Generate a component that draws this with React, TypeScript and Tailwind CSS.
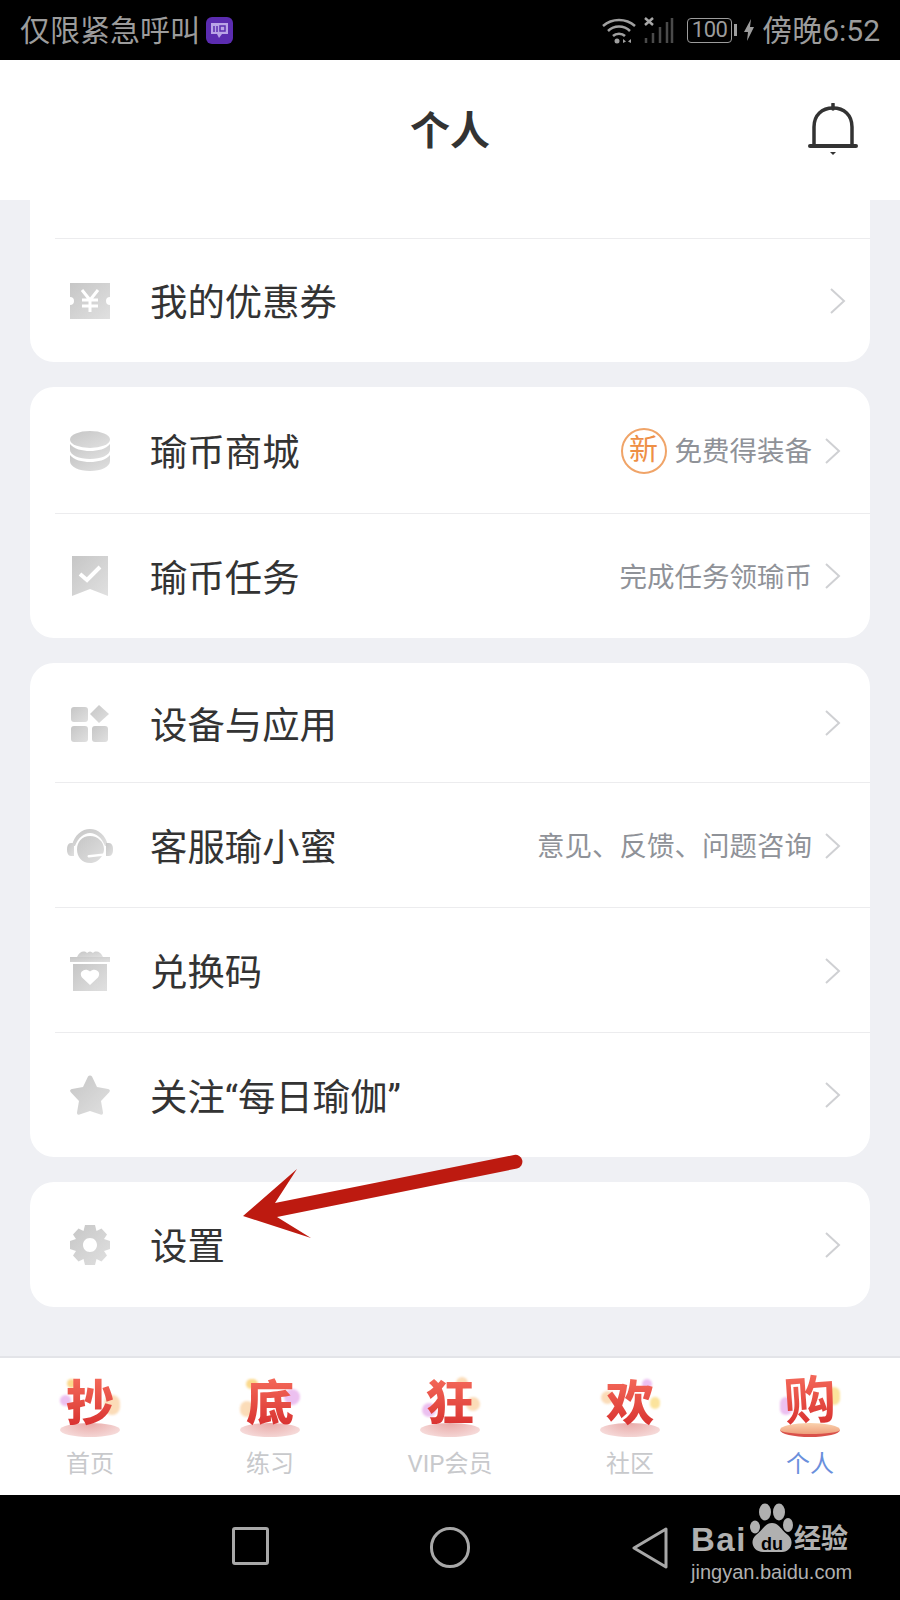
import { ReactNode, useId } from "react";

const CJK = "font-['Roboto','Noto_Sans_CJK_SC',sans-serif]";

function GreyIcon({ w, h, children }: { w: number; h: number; children: (fill: string) => ReactNode }) {
    const id = useId();
    return (
        <svg width={w} height={h} viewBox={`0 0 ${w} ${h}`}>
            <defs>
                <linearGradient id={id} x1="0" y1="0" x2="1" y2="1">
                    <stop offset="0" stopColor="#c6c6c6" />
                    <stop offset="1" stopColor="#e0e0e0" />
                </linearGradient>
            </defs>
            {children(`url(#${id})`)}
        </svg>
    );
}

const CouponIcon = () => (
    <GreyIcon w={40} h={36}>
        {(f) => (
            <>
                <path d="M0 0H40V14A4 4 0 0 0 40 22V36H0V22A4 4 0 0 0 0 14Z" fill={f} />
                <path d="M12 7L20 17L28 7M20 17V29M12 17H28M12 23H28" stroke="#fff" strokeWidth="3" fill="none" />
            </>
        )}
    </GreyIcon>
);

const CoinsIcon = () => (
    <GreyIcon w={40} h={40}>
        {(f) => (
            <>
                <ellipse cx="20" cy="8.500" rx="20" ry="8.500" fill={f} />
                <path d="M0 13C4 18 12 20 20 20S36 18 40 13V19C40 24 31 28 20 28S0 24 0 19Z" fill={f} />
                <path d="M0 24C4 29 12 31 20 31S36 29 40 24V30C40 36 31 40 20 40S0 36 0 30Z" fill={f} />
            </>
        )}
    </GreyIcon>
);

const BookmarkIcon = () => (
    <GreyIcon w={36} h={40}>
        {(f) => (
            <>
                <path d="M0 0H36V40L18 33L0 40Z" fill={f} />
                <path d="M8 18L15 24L28 11" stroke="#fff" strokeWidth="4" fill="none" />
            </>
        )}
    </GreyIcon>
);

const GridIcon = () => (
    <GreyIcon w={38} h={37}>
        {(f) => (
            <>
                <rect x="0" y="2" width="17" height="15" rx="3" fill={f} />
                <path d="M28 0L38 9L28 18L19 9Z" fill={f} />
                <rect x="0" y="21" width="17" height="16" rx="3" fill={f} />
                <rect x="21" y="21" width="16" height="16" rx="3" fill={f} />
            </>
        )}
    </GreyIcon>
);

const HeadsetIcon = () => (
    <GreyIcon w={46} h={34}>
        {(f) => (
            <>
                <path d="M5 17C7 6 15 0 23 0S39 6 41 17H38C35 9 29 4 23 4S11 9 8 17Z" fill={f} />
                <path d="M7 14V27H4C1 27 0 24 0 20.500S1 14 4 14Z" fill={f} />
                <path d="M39 14V27H42C45 27 46 24 46 20.500S45 14 42 14Z" fill={f} />
                <path d="M23 7C31 7 37 13 37 20C37 22 36.500 23.500 36 24.500L22 26C20 26 20 28.500 22 28.500L35 27C32 31.500 28 34 23 34C15 34 10 28 10 20.500S15 7 23 7Z" fill={f} />
            </>
        )}
    </GreyIcon>
);

const GiftIcon = () => (
    <GreyIcon w={40} h={40}>
        {(f) => (
            <>
                <path d="M7 6C9 1 14 -1 17 2C19 0 21 0 23 2C26 -1 31 1 33 6Z" fill={f} />
                <rect x="0" y="6" width="40" height="5" fill={f} />
                <path d="M3 13H37V40H3Z" fill={f} />
                <path d="M20 34L12 26.500C8 21 15 16 20 20.500C25 16 32 21 28 26.500Z" fill="#fff" />
            </>
        )}
    </GreyIcon>
);

const StarIcon = () => (
    <GreyIcon w={40} h={40}>
        {(f) => (
            <path
                d="M18 1.500C19 0 21 0 22 1.500L27 12L38 14C40 14.500 40.500 16 39 17.500L31 26L33 37.500C33 39.500 32 40 30.500 39.500L20 36L9.500 39.500C8 40 7 39.500 7 37.500L9 26L1 17.500C-0.500 16 0 14.500 2 14L13 12Z"
                fill={f}
            />
        )}
    </GreyIcon>
);

const GearIcon = () => (
    <GreyIcon w={40} h={40}>
        {(f) => (
            <path
                fillRule="evenodd"
                d="M15 0H25L26.500 6L31.500 3.500L37 9.500L34 14L40 16V24L34 26L37 30.500L31.500 36.500L26.500 34L25 40H15L13.500 34L8.500 36.500L3 30.500L6 26L0 24V16L6 14L3 9.500L8.500 3.500L13.500 6ZM20 13C15.500 13 13 16.500 13 20S15.500 27 20 27S27 23.500 27 20S24.500 13 20 13Z"
                fill={f}
            />
        )}
    </GreyIcon>
);

function Chevron({ className = "" }: { className?: string }) {
    return (
        <svg width="17" height="28" viewBox="0 0 17 28" className={`shrink-0 ${className}`}>
            <path d="M2 2L15 14L2 26" stroke="#cfd0d3" strokeWidth="2" fill="none" />
        </svg>
    );
}

function Row({
    icon,
    label,
    right,
    height,
    divider = true,
    chevronClass,
}: {
    icon: ReactNode;
    label: string;
    right?: ReactNode;
    height: string;
    divider?: boolean;
    chevronClass?: string;
}) {
    return (
        <div className={`relative flex items-center pr-[29px] ${height}`}>
            <div className="ml-[37px] mr-[37px] flex w-[46px] items-center justify-center">{icon}</div>
            <span className="flex-1 pt-[6px] text-[37.4px] text-[#333333]">{label}</span>
            {right}
            <Chevron className={chevronClass} />
            {divider && <div className="absolute bottom-0 left-[25px] right-0 h-px bg-[#ececee]" />}
        </div>
    );
}

const Hint = ({ children }: { children: ReactNode }) => (
    <span className="mr-[12px] pt-[3px] text-[27.5px] text-[#8f9298]">{children}</span>
);

function TabItem({
    glyph,
    label,
    blobs,
    active = false,
}: {
    glyph: string;
    label: string;
    blobs: ReactNode;
    active?: boolean;
}) {
    return (
        <div className="flex flex-col items-center">
            <div className="relative flex h-[70px] w-[60px] items-start justify-center">
                {active ? (
                    <div className="absolute bottom-[10px] left-0 h-[14px] w-[60px] rounded-[50%] border-b-[3px] border-[#d9504a] bg-gradient-to-b from-[#f9d2ae] to-[#ee9f7c]" />
                ) : (
                    <div className="absolute bottom-[10px] h-[14px] w-[60px] rounded-[50%] bg-[radial-gradient(ellipse_at_center_top,#e8a9a7,#f9e6e5)]" />
                )}
                {blobs}
                <span
                    className={`relative bg-gradient-to-b from-[#f4695a] to-[#d6282b] bg-clip-text text-transparent ${
                        active ? "-mt-[3px] -rotate-[4deg] text-[52px] leading-[56px] font-bold" : "text-[48px] leading-[54px] font-black"
                    }`}
                >
                    {glyph}
                </span>
            </div>
            <span className={`mt-[2px] text-[24px] leading-[30px] ${active ? "text-[#6a8fdc]" : "text-[#c8c9cc]"}`}>
                {label}
            </span>
        </div>
    );
}

const Blob = ({ className }: { className: string }) => <div className={`absolute rounded-full blur-[1px] ${className}`} />;

export default function App() {
    return (
        <div className={`relative flex h-[1600px] w-[900px] flex-col overflow-hidden bg-black ${CJK}`}>
            {/* Status bar */}
            <div className="flex h-[60px] shrink-0 items-center justify-between pl-[20px] pr-[20px] text-[#9c9c9c]">
                <div className="flex items-center gap-[6px]">
                    <span className="pt-[2px] text-[30px] leading-none">仅限紧急呼叫</span>
                    <div className="flex h-[27px] w-[27px] items-center justify-center rounded-[6px] bg-[#5b2cb0]">
                        <svg width="19" height="17" viewBox="0 0 19 17">
                            <path d="M1 1H18V12H12L9 16L7 12H1Z" fill="#b9a4e6" />
                            <path d="M4 4V10M7 4V10M10 4H15V9H10Z" stroke="#5b2cb0" strokeWidth="1.500" fill="none" />
                        </svg>
                    </div>
                </div>
                <div className="flex items-center">
                    <svg width="72" height="27" viewBox="0 0 72 27" className="mr-[13px]">
                        <path d="M1 9C10 1 24 1 33 9M6 14C12 8 22 8 28 14M11 19C14 16 20 16 23 19" stroke="#a0a0a0" strokeWidth="2.500" fill="none" />
                        <circle cx="15" cy="24" r="2.500" fill="#a0a0a0" />
                        <path d="M21 22L24 24.500L21 26ZM29 22L26 24.500L29 26Z" fill="#a0a0a0" />
                        <path d="M43 1L51 8M51 1L43 8" stroke="#a8a8a8" strokeWidth="2.500" />
                        <path d="M44 21V26M51 16V26M58 10V26M65 5V26M70 1V26" stroke="#4a4a4a" strokeWidth="2.500" />
                    </svg>
                    <div className="flex h-[25px] w-[45px] items-center justify-center rounded-[4px] border border-[#9c9c9c] text-[22px] leading-none tracking-[-0.5px]">
                        100
                    </div>
                    <div className="ml-[2px] h-[12px] w-[3px] bg-[#9c9c9c]" />
                    <svg width="10" height="22" viewBox="0 0 10 22" className="ml-[7px] mr-[8px]">
                        <path d="M7 0L0 13H4L3 22L10 8H6Z" fill="#9c9c9c" />
                    </svg>
                    <span className="pt-[2px] text-[30px] leading-none">傍晚6:52</span>
                </div>
            </div>

            {/* Header */}
            <header className="relative flex h-[140px] shrink-0 items-center justify-center bg-white">
                <h1 className="pt-[4px] text-[40px] font-bold text-[#333333]">个人</h1>
                <svg width="50" height="52" viewBox="0 0 50 52" className="absolute left-[808px] top-[43px]">
                    <path d="M25 1V6" stroke="#333" strokeWidth="3.500" strokeLinecap="round" />
                    <path d="M6 43V24C6 12 14 5 25 5S44 12 44 24V43" stroke="#333" strokeWidth="3.500" fill="none" />
                    <path d="M2 43H48" stroke="#333" strokeWidth="4" strokeLinecap="round" />
                    <path d="M22 49H28L25 52Z" fill="#333" />
                </svg>
            </header>

            {/* Content */}
            <main className="flex flex-1 flex-col gap-[25px] bg-[#eff0f4] px-[30px]">
                <section className="rounded-b-[24px] bg-white pt-[38px]">
                    <div className="ml-[25px] h-px bg-[#ececee]" />
                    <Row
                        icon={<CouponIcon />}
                        label="我的优惠券"
                        height="h-[123px]"
                        divider={false}
                        chevronClass="translate-x-[5px]"
                    />
                </section>

                <section className="rounded-[24px] bg-white">
                    <Row
                        icon={<CoinsIcon />}
                        label="瑜币商城"
                        height="h-[127px]"
                        right={
                            <>
                                <div className="mr-[8px] flex h-[46px] w-[46px] items-center justify-center rounded-full border-2 border-[#f0a468] text-[29px] text-[#ee8f45]">
                                    新
                                </div>
                                <Hint>免费得装备</Hint>
                            </>
                        }
                    />
                    <Row
                        icon={<BookmarkIcon />}
                        label="瑜币任务"
                        height="h-[124px]"
                        divider={false}
                        right={<Hint>完成任务领瑜币</Hint>}
                    />
                </section>

                <section className="rounded-[24px] bg-white">
                    <Row icon={<GridIcon />} label="设备与应用" height="h-[120px]" />
                    <Row
                        icon={<HeadsetIcon />}
                        label="客服瑜小蜜"
                        height="h-[125px]"
                        right={<Hint>意见、反馈、问题咨询</Hint>}
                    />
                    <Row icon={<GiftIcon />} label="兑换码" height="h-[125px]" />
                    <Row icon={<StarIcon />} label="关注“每日瑜伽”" height="h-[124px]" divider={false} />
                </section>

                <section className="rounded-[24px] bg-white">
                    <Row icon={<GearIcon />} label="设置" height="h-[125px]" divider={false} />
                </section>
            </main>

            {/* Tab bar */}
            <nav className="grid h-[139px] shrink-0 grid-cols-5 border-t-2 border-[#e3e4e8] bg-white pt-[19px]">
                <TabItem
                    glyph="抄"
                    label="首页"
                    blobs={
                        <>
                            <Blob className="left-[7px] top-[2px] h-[9px] w-[9px] bg-[#fbd98c]" />
                            <Blob className="left-0 top-[18px] h-[11px] w-[11px] bg-[#ecc0f0]" />
                            <Blob className="right-0 top-[18px] h-[20px] w-[16px] bg-[#fbdcb8]" />
                        </>
                    }
                />
                <TabItem
                    glyph="底"
                    label="练习"
                    blobs={
                        <>
                            <Blob className="left-[6px] top-[2px] h-[10px] w-[12px] bg-[#fbd98c]" />
                            <Blob className="left-0 top-[24px] h-[16px] w-[14px] bg-[#fbdcb8]" />
                            <Blob className="right-0 top-[12px] h-[16px] w-[16px] bg-[#ecc0f0]" />
                        </>
                    }
                />
                <TabItem
                    glyph="狂"
                    label="VIP会员"
                    blobs={
                        <>
                            <Blob className="left-[2px] top-[26px] h-[14px] w-[14px] bg-[#ecc0f0]" />
                            <Blob className="right-[12px] top-0 h-[12px] w-[12px] bg-[#fbdcb8]" />
                            <Blob className="right-0 top-[20px] h-[14px] w-[14px] bg-[#fbdcb8]" />
                        </>
                    }
                />
                <TabItem
                    glyph="欢"
                    label="社区"
                    blobs={
                        <>
                            <Blob className="left-[1px] top-[14px] h-[13px] w-[13px] bg-[#fbdcb8]" />
                            <Blob className="right-[8px] top-[2px] h-[10px] w-[10px] bg-[#ecc0f0]" />
                            <Blob className="right-0 top-[20px] h-[12px] w-[10px] bg-[#fbe39c]" />
                        </>
                    }
                />
                <TabItem
                    glyph="购"
                    label="个人"
                    active
                    blobs={
                        <>
                            <Blob className="left-[0px] top-[20px] h-[18px] w-[12px] bg-[#ecc0f0]" />
                            <Blob className="right-0 top-[10px] h-[18px] w-[12px] bg-[#fbe39c]" />
                        </>
                    }
                />
            </nav>

            {/* System navigation */}
            <div className="relative flex h-[105px] shrink-0 items-start bg-black pt-[32px]">
                <div className="ml-[232px] h-[38px] w-[37px] rounded-[3px] border-[3px] border-[#a8a8a8]" />
                <div className="ml-[161px] h-[41px] w-[40px] rounded-full border-[3px] border-[#a8a8a8]" />
                <svg width="38" height="42" viewBox="0 0 38 42" className="ml-[161px]">
                    <path d="M35 2L3 21L35 40Z" stroke="#a8a8a8" strokeWidth="3" strokeLinejoin="round" fill="none" />
                </svg>

                {/* Watermark */}
                <div className="absolute left-[691px] top-[10px] h-[80px] w-[165px] text-[#b0b0b0]">
                    <span className="absolute left-0 top-[15px] font-['Liberation_Sans',sans-serif] text-[33px] leading-[40px] font-bold tracking-[1.5px]">
                        Bai
                    </span>
                    <svg width="50" height="50" viewBox="0 0 50 50" className="absolute left-[57px] top-[-3px]">
                        <ellipse cx="17" cy="10" rx="6" ry="8.500" fill="#b0b0b0" />
                        <ellipse cx="31" cy="10" rx="6" ry="8.500" fill="#b0b0b0" />
                        <ellipse cx="7" cy="25" rx="5" ry="6.500" fill="#b0b0b0" />
                        <ellipse cx="40" cy="23" rx="5" ry="7" fill="#b0b0b0" />
                        <path d="M24 21C31 21 33 28 40 33C47 39 43 50 34 50H15C5 50 1 39 8 33C15 28 17 21 24 21Z" fill="#b0b0b0" />
                    </svg>
                    <span className="absolute left-[70px] top-[29px] font-['Liberation_Sans',sans-serif] text-[18px] leading-[20px] font-bold text-black">
                        du
                    </span>
                    <span className="absolute left-[103px] top-[17px] text-[27px] leading-[34px] font-bold">经验</span>
                    <span className="absolute left-0 top-[55px] font-['Liberation_Sans',sans-serif] text-[20px] leading-[24px]">
                        jingyan.baidu.com
                    </span>
                </div>
            </div>

            {/* Annotation arrow */}
            <svg
                width="300"
                height="110"
                viewBox="230 1140 300 110"
                className="absolute left-[230px] top-[1140px]"
            >
                <path
                    d="M243 1216L297 1169L275 1203L514 1155A6.800 6.800 0 0 1 517 1168.500L277 1217L311 1238Z"
                    fill="#bd1a10"
                />
            </svg>
        </div>
    );
}
